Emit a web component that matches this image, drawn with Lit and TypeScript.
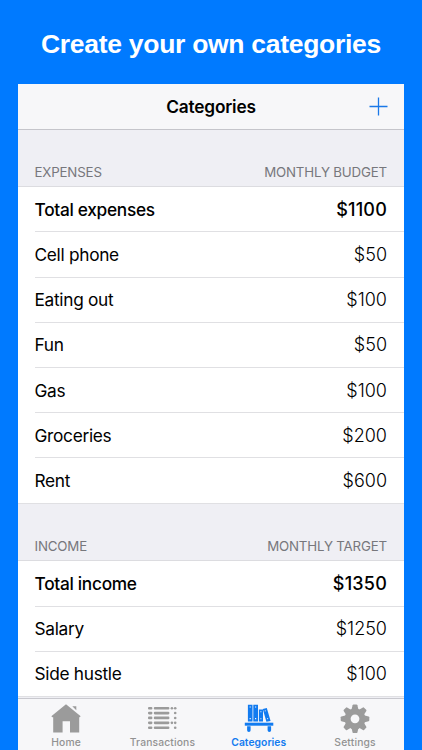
import { LitElement, html, css, svg } from "lit";
import { customElement } from "lit/decorators.js";
import { classMap } from "lit/directives/class-map.js";

interface Row {
  name: string;
  amount: string;
  total?: boolean;
}

interface Section {
  title: string;
  caption: string;
  rows: Row[];
}

const sections: Section[] = [
  {
    title: "EXPENSES",
    caption: "MONTHLY BUDGET",
    rows: [
      { name: "Total expenses", amount: "$1100", total: true },
      { name: "Cell phone", amount: "$50" },
      { name: "Eating out", amount: "$100" },
      { name: "Fun", amount: "$50" },
      { name: "Gas", amount: "$100" },
      { name: "Groceries", amount: "$200" },
      { name: "Rent", amount: "$600" },
    ],
  },
  {
    title: "INCOME",
    caption: "MONTHLY TARGET",
    rows: [
      { name: "Total income", amount: "$1350", total: true },
      { name: "Salary", amount: "$1250" },
      { name: "Side hustle", amount: "$100" },
    ],
  },
];

const homeIcon = svg`
  <path d="M15 .3 29.7 12.2 28.6 13.2H28.2V28.5H19V17.3H11.6V28.5H2.2V13.2H1.4L.3 12.2Z"/>
  <path d="M21.3 2.3H25.3V6.3Z"/>`;

const lineRows = [2.9, 7.7, 12.6, 17.5, 22.4];
const listIcon = svg`${lineRows.map(
  (y, i) => svg`
    <rect x="1" y=${y} width="4.4" height="2.7" rx="1.1"/>
    <rect x="6.8" y=${y} width="15.6" height="2.7" rx="1.1"/>
    ${i % 3 === 0 ? svg`<circle cx="24.9" cy=${y + 1.35} r="1.3"/>` : ""}
    <circle cx="28.2" cy=${y + 1.35} r="1.3"/>`
)}`;

const shelfIcon = svg`
  <path fill-rule="evenodd" d="M3.9 .8H8.5V17.6H3.9ZM5.6 2.4V3.6H6.8V2.4ZM5.6 14V15.2H6.8V14Z"/>
  <path fill-rule="evenodd" d="M9.3 .8H14V17.6H9.3ZM11 2.4V3.6H12.2V2.4ZM11 14V15.2H12.2V14Z"/>
  <path fill-rule="evenodd" d="M14.9 5.6H19V17.6H14.9ZM16.4 7.2V8.2H17.4V7.2ZM16.4 14.2V15.2H17.4V14.2Z"/>
  <path fill-rule="evenodd" d="M18.8 4.9 22.8 4.1 26.6 16.9 22.4 17.7ZM20.7 6.5 20.9 7.5 21.8 7.3 21.6 6.3ZM23.1 14.3 23.3 15.3 24.2 15.1 24 14.1Z"/>
  <path d="M.8 18.7H29.3V21.7H.8Z"/>
  <path d="M3.1 22.3H6.6V26.2Q6.6 27.9 4.85 27.9T3.1 26.2ZM23.6 22.3H27.1V26.2Q27.1 27.9 25.35 27.9T23.6 26.2Z"/>`;

const teeth = [0, 45, 90, 135, 180, 225, 270, 315];
const gearIcon = svg`
  <path fill-rule="evenodd" d="M15 4.4A10.4 10.4 0 1 1 15 25.2 10.4 10.4 0 1 1 15 4.4ZM15 10.4A4.4 4.4 0 1 0 15 19.2 4.4 4.4 0 1 0 15 10.4Z"/>
  ${teeth.map((a) => svg`<path transform="rotate(${a} 15 14.8)" d="M11.4 6 12.6 1.2Q12.8.5 13.5.5H16.5Q17.2.5 17.4 1.2L18.6 6Z"/>`)}`;

const tabs = [
  { label: "Home", icon: homeIcon },
  { label: "Transactions", icon: listIcon },
  { label: "Categories", icon: shelfIcon, active: true },
  { label: "Settings", icon: gearIcon },
];

@customElement("app-root")
export class AppRoot extends LitElement {
  static styles = css`
    :host {
      display: flex;
      flex-direction: column;
      box-sizing: border-box;
      width: 422px;
      height: 750px;
      padding: 0 18px;
      overflow: hidden;
      background: #007aff;
      color: #000;
      font-family: Inter, "Liberation Sans", sans-serif;
    }
    .headline {
      flex: none;
      height: 83.5px;
      margin: 0 -18px;
      padding-top: 29px;
      box-sizing: border-box;
      text-align: center;
      white-space: nowrap;
      color: #fff;
      font: bold 26.5px/30px "Liberation Sans", Arial, sans-serif;
      letter-spacing: -0.29px;
    }
    .screen {
      flex: 1;
      min-height: 0;
      display: flex;
      flex-direction: column;
      background: #efeff4;
    }
    .nav {
      flex: none;
      display: grid;
      grid-template-columns: 1fr auto 1fr;
      align-items: center;
      height: 46px;
      box-sizing: border-box;
      background: #f7f7f9;
      border-bottom: 1px solid #c5c5cb;
    }
    .nav-title {
      grid-column: 2;
      padding-top: 1px;
      font-size: 17.3px;
      font-weight: 600;
      letter-spacing: -0.2px;
    }
    .plus {
      justify-self: end;
      margin-right: 16.5px;
      width: 19px;
      height: 19px;
      stroke: #1a78e8;
      stroke-width: 1.3;
    }
    .list {
      flex: 1;
      min-height: 0;
      overflow: hidden;
    }
    .section-head {
      display: flex;
      justify-content: space-between;
      align-items: flex-end;
      box-sizing: border-box;
      height: 57.8px;
      padding: 0 17px 6.6px 16.5px;
      border-bottom: 1px solid #dcdce0;
      color: #77777c;
      font-size: 13.3px;
      line-height: 16px;
      letter-spacing: -0.17px;
    }
    .rows {
      background: #fff;
    }
    .row {
      display: flex;
      justify-content: space-between;
      align-items: center;
      box-sizing: border-box;
      height: 45.2px;
      margin-left: 16.5px;
      padding-top: 1px;
      padding-right: 17px;
      border-bottom: 1px solid #e0e0e3;
      font-size: 17.3px;
      line-height: 22px;
      letter-spacing: -0.3px;
    }
    .row:last-child {
      margin-left: 0;
      padding-left: 16.5px;
    }
    .amount {
      font-size: 18px;
      font-weight: 300;
      letter-spacing: 0;
    }
    .total {
      font-weight: 500;
    }
    .total .amount {
      font-weight: 500;
      letter-spacing: 0.2px;
    }
    .tabs {
      flex: none;
      display: grid;
      grid-template-columns: repeat(4, 96.3px);
      height: 52px;
      box-sizing: border-box;
      border-top: 1px solid #c9c9cf;
      background: #f7f7f9;
    }
    .tab {
      display: flex;
      flex-direction: column;
      align-items: center;
      padding-top: 5px;
      color: #929292;
      fill: #9b9b9b;
      font-size: 10.3px;
      line-height: 12px;
      font-weight: 500;
      letter-spacing: 0.15px;
    }
    .tab.active {
      color: #127bf0;
      fill: #127bf0;
      font-weight: 600;
      letter-spacing: 0.05px;
    }
    .glyph {
      width: 30px;
      height: 30px;
      margin-bottom: 2px;
    }
  `;

  private renderSection(s: Section) {
    return html`
      <section>
        <div class="section-head"><span>${s.title}</span><span>${s.caption}</span></div>
        <div class="rows">
          ${s.rows.map(
            (r) => html`<div class=${classMap({ row: true, total: !!r.total })}>
              <span>${r.name}</span><span class="amount">${r.amount}</span>
            </div>`
          )}
        </div>
      </section>
    `;
  }

  render() {
    return html`
      <div class="headline">Create your own categories</div>
      <div class="screen">
        <div class="nav">
          <span class="nav-title">Categories</span>
          <svg class="plus" viewBox="0 0 19 19"><path d="M9.5 .5V18.5M.5 9.5H18.5" /></svg>
        </div>
        <div class="list">${sections.map((s) => this.renderSection(s))}</div>
        <div class="tabs">
          ${tabs.map(
            (t) => html`<div class=${classMap({ tab: true, active: !!t.active })}>
              <svg class="glyph" viewBox="0 0 30 30">${t.icon}</svg>
              <span>${t.label}</span>
            </div>`
          )}
        </div>
      </div>
    `;
  }
}
